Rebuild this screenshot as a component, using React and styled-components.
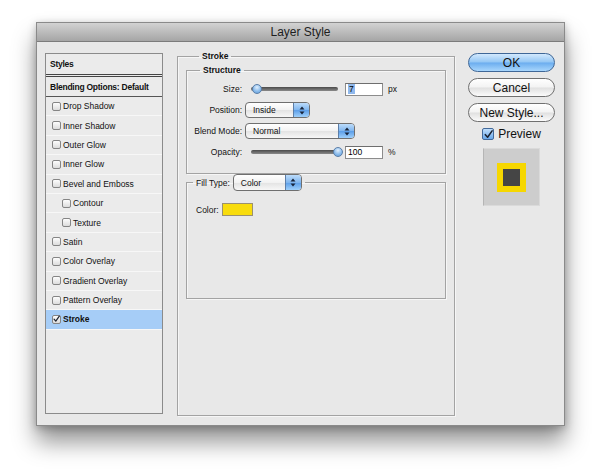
import React from 'react';
import styled, { createGlobalStyle } from 'styled-components';

const GlobalStyle = createGlobalStyle`
  html, body {
    margin: 0;
    padding: 0;
    background: #ffffff;
  }
  body {
    font-family: "Liberation Sans", Arial, sans-serif;
  }
`;

const Page = styled.div`
  width: 600px;
  height: 474px;
  box-sizing: border-box;
  padding: 22px 0 0 36px;
`;

const Window = styled.div`
  width: 529px;
  height: 404px;
  box-sizing: border-box;
  background: #e8e8e8;
  border: 1px solid #8a8a8a;
  box-shadow: 0 16px 22px rgba(0, 0, 0, 0.42), 0 2px 8px rgba(0, 0, 0, 0.25);
  display: flex;
  flex-direction: column;
`;

const TitleBar = styled.div`
  height: 18px;
  border-bottom: 1px solid #7c7c7c;
  background: linear-gradient(#d2d2d2, #a5a5a5);
  display: flex;
  align-items: center;
  justify-content: center;
  font-size: 12px;
  color: #1e1e1e;
`;

const Body = styled.div`
  flex: 1;
  display: flex;
  align-items: flex-start;
  padding: 11px 9px 0 8px;
`;

/* ---------- left styles list ---------- */

const StyleList = styled.div`
  width: 118px;
  height: 361px;
  box-sizing: border-box;
  border: 1px solid #8b8b8b;
  background: #ebebeb;
  font-size: 8.5px;
  color: #111;
`;

const ListHeader = styled.div`
  box-sizing: border-box;
  display: flex;
  align-items: center;
  padding-left: 4px;
  font-weight: bold;
  letter-spacing: -0.25px;
  border-bottom: ${p => p.$double ? '3px double #444' : '1px solid #555'};
  height: ${p => p.$double ? '23px' : '20px'};
`;

const ListItem = styled.div`
  height: 19.4px;
  box-sizing: border-box;
  display: flex;
  align-items: center;
  gap: 2px;
  padding-left: ${p => p.$indent ? 16 : 6}px;
  border-bottom: 1px solid #f7f7f7;
  background: ${p => p.$active ? '#a6cdf7' : 'transparent'};
  font-weight: ${p => p.$active ? 'bold' : 'normal'};
`;

const Box = styled.span`
  width: 9px;
  height: 9px;
  box-sizing: border-box;
  border: 1px solid #858585;
  border-radius: 2px;
  background: linear-gradient(#fdfdfd, #dcdcdc);
  display: inline-flex;
  align-items: center;
  justify-content: center;
  flex: none;
`;

/* ---------- middle fieldsets ---------- */

const Group = styled.fieldset`
  margin: ${p => p.$outer ? '-2px 0 0 14px' : '0'};
  padding: ${p => p.$pad || '0'};
  box-sizing: border-box;
  width: ${p => p.$outer ? '278px' : '260px'};
  height: ${p => p.$h}px;
  border: 1px solid #a3a3a3;
  box-shadow: inset 1px 1px 0 #f6f6f6, 1px 1px 0 #f6f6f6;
  min-width: 0;
`;

const Legend = styled.legend`
  margin-left: ${p => p.$left || 13}px;
  padding: 0 3px;
  font-size: 8.5px;
  line-height: 10px;
  font-weight: ${p => p.$plain ? 'normal' : 'bold'};
  color: #111;
  display: flex;
  align-items: center;
  gap: 3px;
`;

const Row = styled.div`
  display: flex;
  align-items: center;
  height: 16px;
  margin-bottom: 5px;
`;

const Label = styled.span`
  width: 55px;
  text-align: right;
  font-size: 8.5px;
  color: #111;
  margin-right: 3px;
  flex: none;
`;

const SliderWrap = styled.div`
  position: relative;
  width: 94px;
  height: 12px;
  margin-left: 4px;
`;

const Track = styled.div`
  position: absolute;
  left: 2px;
  right: 5px;
  top: 4px;
  height: 4px;
  border-radius: 2px;
  background: linear-gradient(#4a4a4a, #8a8a8a);
`;

const Thumb = styled.div`
  position: absolute;
  top: 1px;
  width: 10px;
  height: 10px;
  box-sizing: border-box;
  border-radius: 50%;
  border: 1px solid #5a7ea8;
  background: radial-gradient(circle at 50% 30%, #e2f0fd 0%, #8dbdec 55%, #5f9bd8 100%);
`;

const NumField = styled.div`
  width: 38px;
  height: 13px;
  box-sizing: border-box;
  margin-left: 2px;
  border: 1px solid #8c8c8c;
  border-top-color: #6e6e6e;
  background: #fff;
  font-size: 8.5px;
  line-height: 11px;
  padding-left: 2px;
  display: flex;
  align-items: center;
`;

const Selected = styled.span`
  background: #8fb8ec;
  padding: 0 1px;
  line-height: 10px;
`;

const Unit = styled.span`
  font-size: 8.5px;
  margin-left: 5px;
  color: #111;
`;

const Popup = styled.div`
  width: ${p => p.$w}px;
  height: ${p => p.$h || 16}px;
  box-sizing: border-box;
  border: 1px solid #6f6f6f;
  border-radius: 4px;
  background: linear-gradient(#ffffff 0%, #f2f2f2 50%, #e3e3e3 52%, #f7f7f7 100%);
  display: flex;
  align-items: stretch;
  overflow: hidden;
  font-size: 8.5px;
  font-weight: normal;
  color: #111;
`;

const PopupText = styled.span`
  flex: 1;
  display: flex;
  align-items: center;
  padding-left: 7px;
`;

const Stepper = styled.span`
  width: 15px;
  border-left: 1px solid #5c7ea8;
  background: linear-gradient(#bcdcfb 0%, #7fb5ee 50%, #5c9ee8 52%, #9fd0fb 100%);
  display: flex;
  align-items: center;
  justify-content: center;
`;

const ColorRow = styled.div`
  display: flex;
  align-items: center;
  gap: 3px;
  padding: 12px 0 0 9px;
  font-size: 8.5px;
  color: #111;
`;

const Swatch = styled.div`
  width: 31px;
  height: 13px;
  box-sizing: border-box;
  border: 1px solid #9a9070;
  background: #f8dc0c;
`;

/* ---------- right column ---------- */

const Side = styled.div`
  width: 87px;
  margin-left: 13px;
  display: flex;
  flex-direction: column;
  align-items: center;
  gap: 6px;
`;

const Button = styled.div`
  width: 87px;
  height: 19px;
  box-sizing: border-box;
  border-radius: 10px;
  border: 1px solid ${p => p.$primary ? '#3f6797' : '#707070'};
  background: ${p => p.$primary
    ? 'linear-gradient(#d3e9fd 0%, #93c6f4 48%, #6badef 52%, #a8d6fc 100%)'
    : 'linear-gradient(#ffffff 0%, #f3f3f3 48%, #e0e0e0 52%, #fbfbfb 100%)'};
  display: flex;
  align-items: center;
  justify-content: center;
  font-size: 12px;
  color: #111;
`;

const PreviewToggle = styled.label`
  display: flex;
  align-items: center;
  gap: 4px;
  font-size: 12px;
  color: #111;
  margin-top: -1px;
`;

const BlueBox = styled.span`
  width: 12px;
  height: 12px;
  box-sizing: border-box;
  border: 1px solid #42699a;
  border-radius: 2px;
  background: linear-gradient(#c0defb, #6aa9ec);
  display: inline-flex;
  align-items: center;
  justify-content: center;
`;

const PreviewPane = styled.div`
  width: 57px;
  height: 58px;
  box-sizing: border-box;
  margin-top: 1px;
  background: #cdcdcd;
  border: 1px solid #dadada;
  border-left-color: #b5b5b5;
  display: flex;
  align-items: center;
  justify-content: center;
`;

const PreviewSquare = styled.div`
  width: 29px;
  height: 29px;
  box-sizing: border-box;
  border: 6px solid #f6d700;
  background: #454545;
`;

const Check = ({ size = 9 }) => (
  <svg width={size} height={size} viewBox="0 0 10 10">
    <path d="M1.5 5.2 L4 8 L9 1" fill="none" stroke="#1b2230" strokeWidth="1.7" strokeLinecap="round" strokeLinejoin="round" />
  </svg>
);

const Arrows = () => (
  <svg width="6" height="9" viewBox="0 0 6 9">
    <path d="M3 0.5 L5.5 3.5 L0.5 3.5 Z" fill="#18243a" />
    <path d="M3 8.5 L5.5 5.5 L0.5 5.5 Z" fill="#18243a" />
  </svg>
);

const Slider = ({ value, min, max }) => {
  const frac = (value - min) / (max - min);
  return (
    <SliderWrap>
      <Track />
      <Thumb style={{ left: 1 + frac * 83 }} />
    </SliderWrap>
  );
};

const Select = ({ value, width, height }) => (
  <Popup $w={width} $h={height}>
    <PopupText>{value}</PopupText>
    <Stepper><Arrows /></Stepper>
  </Popup>
);

const effects = [
  { name: 'Drop Shadow' },
  { name: 'Inner Shadow' },
  { name: 'Outer Glow' },
  { name: 'Inner Glow' },
  { name: 'Bevel and Emboss' },
  { name: 'Contour', indent: true },
  { name: 'Texture', indent: true },
  { name: 'Satin' },
  { name: 'Color Overlay' },
  { name: 'Gradient Overlay' },
  { name: 'Pattern Overlay' },
  { name: 'Stroke', checked: true },
];

export default function App() {
  return (
    <Page>
      <GlobalStyle />
      <Window>
        <TitleBar>Layer Style</TitleBar>
        <Body>
          <StyleList>
            <ListHeader $double>Styles</ListHeader>
            <ListHeader>Blending Options: Default</ListHeader>
            {effects.map(e => (
              <ListItem key={e.name} $indent={e.indent} $active={e.checked}>
                <Box>{e.checked && <Check size={8} />}</Box>
                {e.name}
              </ListItem>
            ))}
          </StyleList>

          <Group $outer $h={365} $pad="4px 8px 0">
            <Legend>Stroke</Legend>
            <Group $h={109} $pad="6px 0 0">
              <Legend>Structure</Legend>
              <Row>
                <Label>Size:</Label>
                <Slider value={7} min={1} max={250} />
                <NumField><Selected>7</Selected></NumField>
                <Unit>px</Unit>
              </Row>
              <Row>
                <Label>Position:</Label>
                <Select value="Inside" width={65} />
              </Row>
              <Row>
                <Label>Blend Mode:</Label>
                <Select value="Normal" width={110} />
              </Row>
              <Row>
                <Label>Opacity:</Label>
                <Slider value={100} min={0} max={100} />
                <NumField>100</NumField>
                <Unit>%</Unit>
              </Row>
            </Group>
            <Group $h={125}>
              <Legend $left={6} $plain>
                Fill Type:
                <Select value="Color" width={69} height={17} />
              </Legend>
              <ColorRow>
                Color:
                <Swatch />
              </ColorRow>
            </Group>
          </Group>

          <Side>
            <Button $primary>OK</Button>
            <Button>Cancel</Button>
            <Button>New Style...</Button>
            <PreviewToggle>
              <BlueBox><Check size={9} /></BlueBox>
              Preview
            </PreviewToggle>
            <PreviewPane>
              <PreviewSquare />
            </PreviewPane>
          </Side>
        </Body>
      </Window>
    </Page>
  );
}
